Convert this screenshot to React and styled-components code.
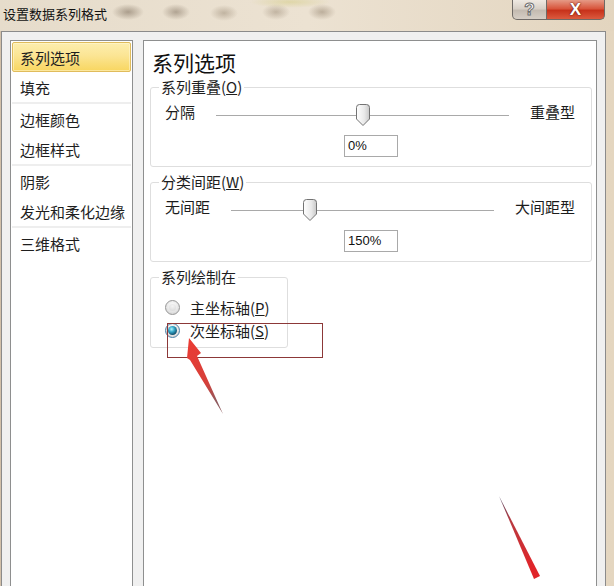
import React from 'react';
import styled, { createGlobalStyle, css } from 'styled-components';

const GlobalStyle = createGlobalStyle`
  html, body {
    margin: 0;
    padding: 0;
  }
  body {
    width: 614px;
    height: 586px;
    overflow: hidden;
    background: #e2d3ba;
    font-family: "Noto Sans CJK SC", "Noto Sans", sans-serif;
    color: #1c1c1c;
  }
  * {
    box-sizing: border-box;
  }
`;

const Window = styled.div`
  display: flex;
  flex-direction: column;
  height: 586px;
  background: linear-gradient(to right, #c9b49a 0, #efe6d8 2px, #e9dfcf 40%, #e4d6c0 100%);
`;

const TitleBar = styled.div`
  height: 31px;
  display: flex;
  align-items: flex-start;
  justify-content: space-between;
  padding-right: 9px;
  background:
    radial-gradient(ellipse 16px 8px at 128px 12px, rgba(120, 104, 86, 0.55), transparent),
    radial-gradient(ellipse 14px 8px at 176px 12px, rgba(120, 104, 86, 0.5), transparent),
    radial-gradient(ellipse 14px 8px at 224px 13px, rgba(130, 112, 90, 0.4), transparent),
    radial-gradient(ellipse 40px 6px at 290px 2px, rgba(214, 206, 140, 0.6), transparent),
    radial-gradient(ellipse 14px 8px at 276px 12px, rgba(130, 112, 90, 0.4), transparent),
    radial-gradient(ellipse 14px 8px at 322px 12px, rgba(130, 112, 90, 0.45), transparent),
    linear-gradient(to right, #e6dccb, #ece2d2 50%, #e3d5bf);
`;

const Title = styled.div`
  padding: 4px 0 0 3px;
  font-size: 13px;
  line-height: 20px;
  color: #111;
`;

const Buttons = styled.div`
  display: flex;
`;

const CapButton = styled.div`
  height: 20px;
  display: flex;
  align-items: center;
  justify-content: center;
  border: 1px solid #6f6a66;
  border-top: none;
  font-family: "Liberation Sans", sans-serif;
  font-weight: bold;
  color: #fff;
  ${(p) =>
    p.$close
      ? css`
          width: 58px;
          border-left: none;
          border-radius: 0 0 5px 0;
          background: linear-gradient(#e59a86, #d8563d 45%, #c7321b 55%, #dc5a3e);
          font-size: 17px;
          text-shadow: 0 0 2px #6b1a10, 0 0 1px #6b1a10;
        `
      : css`
          width: 35px;
          border-radius: 0 0 0 5px;
          background: linear-gradient(#efe9e2, #d8d0c7 45%, #c4bbb1 55%, #d6cec5);
          font-size: 17px;
          -webkit-text-stroke: 1px #6d6d6d;
        `}
`;

const Content = styled.div`
  flex: 1;
  min-height: 0;
  display: flex;
  gap: 10px;
  margin: 0 8px 0 1px;
  padding: 8px 8px 0 8px;
  border: 1px solid #8b8b8b;
  border-bottom: none;
  background: #f0f0f0;
`;

const Nav = styled.div`
  width: 123px;
  padding: 1px;
  border: 1px solid #8e8f8f;
  border-bottom: none;
  background: #fff;
`;

const NavGroup = styled.div`
  border-bottom: 2px solid #eeeeee;
  &:last-child {
    border-bottom: none;
  }
`;

const NavItem = styled.div`
  height: 30px;
  display: flex;
  align-items: center;
  padding-left: 8px;
  font-size: 15px;
  color: #1e1e1e;
  white-space: nowrap;
  ${(p) =>
    p.$active &&
    css`
      padding-left: 7px;
      border: 1px solid #e0bc5c;
      border-radius: 2px;
      background: linear-gradient(#fdeeae, #fbe594 45%, #f8d660);
      box-shadow: inset 0 0 0 1px rgba(255, 250, 220, 0.5);
    `}
`;

const Panel = styled.div`
  position: relative;
  flex: 1;
  padding: 0 4px 0 6px;
  border: 1px solid #8e8f8f;
  border-bottom: none;
  background: #fff;
`;

const Heading = styled.h1`
  margin: 0 0 4px;
  padding: 9px 0 0 2px;
  font-size: 21px;
  font-weight: normal;
  line-height: 24px;
  color: #111;
`;

const Group = styled.fieldset`
  width: ${(p) => p.$width || 442}px;
  margin: 0 0 6px;
  padding: ${(p) => (p.$radio ? '10px 0 5px' : '8px 0 9px')};
  border: 1px solid #dedede;
  border-radius: 3px;
  min-width: 0;
`;

const Legend = styled.legend`
  margin-left: 8px;
  padding: 0 2px;
  font-size: 15px;
  line-height: 18px;
  color: #1e1e1e;
`;

const SliderRow = styled.div`
  display: flex;
  align-items: center;
  height: 22px;
  padding: 0 16px 0 14px;
`;

const SideLabel = styled.span`
  padding-bottom: 8px;
  font-size: 15px;
  white-space: nowrap;
`;

const Track = styled.div`
  position: relative;
  flex: 1;
  height: 22px;
  margin: 0 21px;
  &::before {
    content: '';
    position: absolute;
    left: 0;
    right: 0;
    top: 11px;
    border-top: 1px solid #a9a9a9;
  }
`;

const ThumbSvg = styled.svg`
  position: absolute;
  top: 0;
  width: 14px;
  height: 22px;
`;

const ValueBox = styled.div`
  width: 54px;
  height: 22px;
  margin: 9px auto 0;
  padding-left: 3px;
  border: 1px solid #a9a9a9;
  font-family: "Liberation Sans", sans-serif;
  font-size: 13px;
  line-height: 20px;
  color: #111;
`;

const RadioRow = styled.div`
  display: flex;
  align-items: center;
  gap: 10px;
  height: 23px;
  padding-left: 14px;
  font-size: 15px;
  white-space: nowrap;
`;

const RadioDot = styled.span`
  position: relative;
  width: 15px;
  height: 15px;
  border-radius: 50%;
  border: 1px solid ${(p) => (p.$checked ? '#4a7fa6' : '#969696')};
  background: radial-gradient(circle at 50% 35%, #ffffff, #e4e4e4 60%, #c9c9c9);
  &::after {
    content: '';
    position: absolute;
    inset: ${(p) => (p.$checked ? 2 : 3)}px;
    border-radius: 50%;
    background: ${(p) =>
      p.$checked
        ? 'radial-gradient(circle at 40% 35%, #b4f6ff, #35a6c8 35%, #11506e 72%, #0a3346)'
        : 'radial-gradient(circle at 50% 30%, #f4f4f4, #d6d6d6)'};
  }
`;

const Mark = styled.div`
  position: absolute;
  left: 23px;
  top: 282px;
  width: 156px;
  height: 35px;
  border: 1.5px solid #8c3838;
`;

const ArrowSvg = styled.svg`
  position: absolute;
  left: ${(p) => p.$x}px;
  top: ${(p) => p.$y}px;
  overflow: visible;
`;

function Thumb({ pct }) {
  return (
    <ThumbSvg viewBox="0 0 14 22" style={{ left: `calc(${pct}% - 7px)` }}>
      <defs>
        <linearGradient id="thumbFill" x1="0" x2="1" y1="0" y2="0">
          <stop offset="0" stopColor="#ffffff" />
          <stop offset="0.6" stopColor="#e9e9e9" />
          <stop offset="1" stopColor="#c8c8c8" />
        </linearGradient>
      </defs>
      <path
        d="M3.5 0.5 H10.5 Q13.5 0.5 13.5 3.5 V15 L7 21.5 L0.5 15 V3.5 Q0.5 0.5 3.5 0.5 Z"
        fill="url(#thumbFill)"
        stroke="#737373"
        strokeWidth="1"
      />
    </ThumbSvg>
  );
}

function Slider({ legend, hotkey, left, right, pct, value }) {
  return (
    <Group>
      <Legend>
        {legend}(<u>{hotkey}</u>)
      </Legend>
      <SliderRow>
        <SideLabel>{left}</SideLabel>
        <Track>
          <Thumb pct={pct} />
        </Track>
        <SideLabel>{right}</SideLabel>
      </SliderRow>
      <ValueBox>{value}</ValueBox>
    </Group>
  );
}

const navGroups = [
  ['系列选项', '填充'],
  ['边框颜色', '边框样式'],
  ['阴影', '发光和柔化边缘'],
  ['三维格式'],
];

export default function App() {
  return (
    <>
      <GlobalStyle />
      <Window>
        <TitleBar>
          <Title>设置数据系列格式</Title>
          <Buttons>
            <CapButton>?</CapButton>
            <CapButton $close>X</CapButton>
          </Buttons>
        </TitleBar>
        <Content>
          <Nav>
            {navGroups.map((group, i) => (
              <NavGroup key={i}>
                {group.map((item) => (
                  <NavItem key={item} $active={item === '系列选项'}>
                    {item}
                  </NavItem>
                ))}
              </NavGroup>
            ))}
          </Nav>
          <Panel>
            <Heading>系列选项</Heading>
            <Slider legend="系列重叠" hotkey="O" left="分隔" right="重叠型" pct={50} value="0%" />
            <Slider legend="分类间距" hotkey="W" left="无间距" right="大间距型" pct={30} value="150%" />
            <Group $width={138} $radio>
              <Legend>系列绘制在</Legend>
              <RadioRow>
                <RadioDot />
                <span>
                  主坐标轴(<u>P</u>)
                </span>
              </RadioRow>
              <RadioRow>
                <RadioDot $checked />
                <span>
                  次坐标轴(<u>S</u>)
                </span>
              </RadioRow>
            </Group>

            <Mark />
            <ArrowSvg $x={21} $y={294} width="65" height="85">
              <defs>
                <linearGradient id="arrowA" x1="0" y1="0" x2="0.4" y2="1">
                  <stop offset="0" stopColor="#ec3b33" />
                  <stop offset="0.7" stopColor="#d6403a" />
                  <stop offset="1" stopColor="#8e5a5e" />
                </linearGradient>
              </defs>
              <polygon points="24,3 36,18 32,21 58,79 25,25 22,23" fill="url(#arrowA)" />
            </ArrowSvg>
            <ArrowSvg $x={350} $y={450} width="50" height="100">
              <defs>
                <linearGradient id="arrowB" x1="0" y1="0" x2="0.3" y2="1">
                  <stop offset="0" stopColor="#4f4866" />
                  <stop offset="0.35" stopColor="#b83a40" />
                  <stop offset="1" stopColor="#e0252a" />
                </linearGradient>
              </defs>
              <polygon points="5,5 46,85 40,88" fill="url(#arrowB)" />
            </ArrowSvg>
          </Panel>
        </Content>
      </Window>
    </>
  );
}
